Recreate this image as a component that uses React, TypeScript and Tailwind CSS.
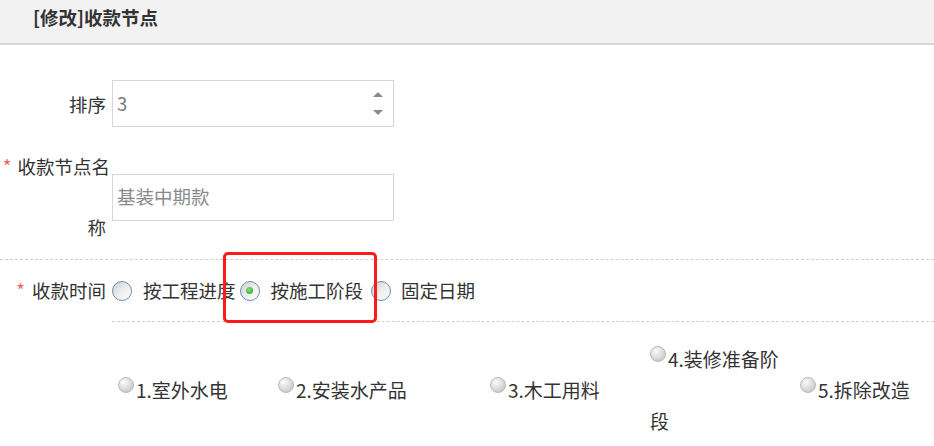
import React from "react";

const font = { fontFamily: '"Noto Sans CJK SC", "Noto Sans", sans-serif' };

function Radio({ checked }: { checked?: boolean }) {
  return (
    <span className="relative flex h-[20px] w-[20px] shrink-0 items-center justify-center rounded-full border border-[#6b8db3] bg-linear-to-br from-[#cfcfcf] via-[#ededed] to-white">
      {checked && (
        <span className="h-[7px] w-[7px] rounded-full bg-[radial-gradient(circle_at_40%_35%,#7be07b,#1fa81f)]" />
      )}
    </span>
  );
}

function Opt({ label, w, innerW }: { label: string; w: string; innerW?: string }) {
  return (
    <div className={`shrink-0 ${w}`}>
      <div className={`text-[19px] leading-[62px] text-[#333] ${innerW ?? ""}`}>
        <span className="mr-[2px] inline-block h-[16px] w-[16px] rounded-full border border-[#b8b8b8] bg-[radial-gradient(circle_at_35%_30%,#fbfbfb,#d0d0d0_70%,#bdbdbd)] align-[5px]" />
        {label}
      </div>
    </div>
  );
}

export default function App() {
  return (
    <div className="relative h-[446px] w-[934px] overflow-hidden bg-white text-[#333]" style={font}>
      {/* header */}
      <div className="h-[45px] border-b-2 border-[#d9d9d9] bg-[#f2f2f2] pl-[33px] pt-[4px]">
        <span className="text-[18.5px] font-bold leading-[26px] text-[#333]">[修改]收款节点</span>
      </div>

      {/* row 排序 */}
      <div className="mt-[35px] flex items-center">
        <div className="w-[106px] text-right text-[18.5px] leading-[26px]">排序</div>
        <div className="ml-[6px] flex h-[47px] w-[282px] items-center justify-between border border-[#d6d6d6] pl-[4px] pr-[10px]">
          <span className="text-[18.5px] text-[#7a7a7a]">3</span>
          <div className="flex flex-col items-center gap-[13px]">
            <span className="h-0 w-0 border-x-[5px] border-b-[5px] border-x-transparent border-b-[#8a8a8a]" />
            <span className="h-0 w-0 border-x-[5px] border-t-[5px] border-x-transparent border-t-[#8a8a8a]" />
          </div>
        </div>
      </div>

      {/* row 收款节点名称 */}
      <div className="mt-[9px] flex items-center border-b border-dashed border-[#cfcfcf] pb-[1px]">
        <div className="w-[110px] text-right text-[18.5px] leading-[61px]">
          <span className="mr-[6px] text-[#f06060]">*</span>收款节点名
          <br />
          <span className="pr-[4px]">称</span>
        </div>
        <div className="ml-[2px] flex h-[47px] w-[282px] items-center border border-[#d6d6d6] pl-[4px]">
          <span className="text-[18.5px] text-[#8a8a8a]">基装中期款</span>
        </div>
      </div>

      {/* row 收款时间 */}
      <div className="flex items-center">
        <div className="w-[106px] text-right text-[18.5px]">
          <span className="mr-[7px] text-[#f06060]">*</span>收款时间
        </div>
        <div className="ml-[6px] flex h-[62px] flex-1 items-center border-b border-dashed border-[#cfcfcf] text-[18.5px]">
          <Radio />
          <span className="ml-[11px] mr-[4px]">按工程进度</span>
          <Radio checked />
          <span className="ml-[11px] mr-[8px]">按施工阶段</span>
          <Radio />
          <span className="ml-[10px]">固定日期</span>
        </div>
      </div>

      {/* options */}
      <div className="mt-[6px] flex items-center pl-[118px]">
        <Opt label="1.室外水电" w="w-[160px]" />
        <Opt label="2.安装水产品" w="w-[212px]" />
        <Opt label="3.木工用料" w="w-[160px]" />
        <Opt label="4.装修准备阶段" w="w-[150px]" innerW="w-[132px]" />
        <Opt label="5.拆除改造" w="w-[134px]" />
      </div>

      {/* red annotation box */}
      <div className="pointer-events-none absolute left-[223px] top-[252px] h-[71px] w-[154px] rounded-[5px] border-[3px] border-[#ff1a1a]" />
    </div>
  );
}
